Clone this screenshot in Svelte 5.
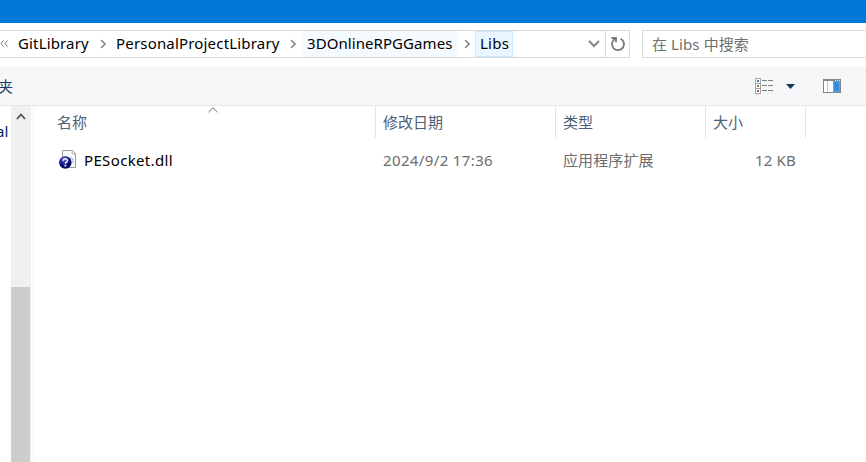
<script>
  const columns = [
    { label: '名称', width: 342 },
    { label: '修改日期', width: 180 },
    { label: '类型', width: 150 },
    { label: '大小', width: 100 }
  ];
</script>

<div class="window">
  <div class="titlebar"></div>
  <div class="navigation">
    <div class="address">
      <svg class="overflow" width="9" height="10" viewBox="0 0 9 10"><path d="M3.5 1.5 1 4.5l2.5 3M7.5 1.5 5 4.5l2.5 3" /></svg>
      <span class="crumb git">GitLibrary</span>
      <span class="sep"><svg width="6" height="10" viewBox="0 0 6 10"><path d="M1 1l4 4-4 4" /></svg></span>
      <span class="crumb project">PersonalProjectLibrary</span>
      <span class="sep"><svg width="6" height="10" viewBox="0 0 6 10"><path d="M1 1l4 4-4 4" /></svg></span>
      <span class="crumb games">3DOnlineRPGGames</span>
      <span class="sep"><svg width="6" height="10" viewBox="0 0 6 10"><path d="M1 1l4 4-4 4" /></svg></span>
      <span class="crumb libs">Libs</span>
      <svg class="drop" width="12" height="8" viewBox="0 0 12 8"><path d="M1 1l5 5 5-5" /></svg>
      <span class="refresh"><svg width="16" height="16" viewBox="0 0 16 16"><path d="M10.5 2.7A6 6 0 1 1 4.8 3.1M1.5 2H6v4.3" /></svg></span>
    </div>
    <div class="search">在 Libs 中搜索</div>
  </div>

  <div class="toolbar">
    <span class="folder">夹</span>
    <svg class="view" width="18" height="17" viewBox="0 0 18 17">
      <path fill="#a0a4a8" d="M0 0h6v16H0z" />
      <path fill="#fff" d="M1 1h4v4H1zM1 6h4v4H1zM1 11h4v4H1z" />
      <path fill="#387eae" d="M2 2h2v2H2z" /><path fill="#79923b" d="M2 7h2v2H2z" /><path fill="#bd5146" d="M2 12h2v2H2z" />
      <path fill="#7b8082" d="M7 2h5v1H7zM13 2h5v1h-5zM7 7h5v1H7zM13 7h5v1h-5zM7 12h5v1H7zM13 12h5v1h-5z" />
    </svg>
    <svg class="triangle" width="9" height="5" viewBox="0 0 9 5"><path fill="#18365d" d="M0 0h9L4.5 5z" /></svg>
    <svg class="pane" width="18" height="14" viewBox="0 0 18 14">
      <path fill="#858585" d="M0 0h18v14H0z" /><path fill="#fff" d="M1 2h16v11H1z" />
      <path fill="#c4c1b9" d="M4 2h1v11H4z" /><path fill="#55a8ef" d="M10 2h7v11h-7z" /><path fill="#318de0" d="M11 3h5v9h-5z" />
      <path fill="#ddd" d="M12 1h1v1h-1zM14 1h1v1h-1zM16 1h1v1h-1z" />
    </svg>
  </div>

  <main>
    <aside><span>al</span></aside>
    <div class="scrollbar">
      <svg width="10" height="7" viewBox="0 0 10 7"><path d="M1 6l4-4.5L9 6" /></svg>
      <div class="thumb"></div>
    </div>
    <section>
      <div class="heads">
        {#each columns as column, i}
          <div class="head" style:width="{column.width}px">
            {column.label}
            {#if i === 0}<svg class="sort" width="10" height="6" viewBox="0 0 10 6"><path d="M.5 5.2 5 .8l4.5 4.4" /></svg>{/if}
          </div>
        {/each}
      </div>
      <div class="file">
        <svg class="dll" width="18" height="20" viewBox="0 0 18 20">
          <defs><radialGradient id="ball" cx="40%" cy="30%"><stop offset="0" stop-color="#6267d5" /><stop offset=".55" stop-color="#2222a0" /><stop offset="1" stop-color="#080864" /></radialGradient></defs>
          <path class="sheet" fill="#f8fafb" stroke="#999" d="M3.5.5h10l3 3v14h-13z" />
          <path fill="#e3e5e6" stroke="#aaa" stroke-width=".7" d="M13 .5V4h3.5" />
          <circle cx="11" cy="11" r="3" fill="none" stroke="#a8c3cf" stroke-width="1.8" stroke-dasharray="1.5 .8" />
          <circle cx="6.3" cy="12.5" r="6.2" fill="url(#ball)" />
          <path fill="none" stroke="#fff" stroke-width="1.5" d="M4.2 10.7c.1-2.6 4.5-2.5 4.3 0-.1 1.5-2 1.5-2.1 3" />
          <path fill="#fff" d="M5.5 14.8h1.8v1.7H5.5z" />
        </svg>
        <span class="name">PESocket.dll</span>
        <span class="date">2024/9/2 17:36</span>
        <span class="type">应用程序扩展</span>
        <span class="size">12 KB</span>
      </div>
    </section>
  </main>
</div>

<style>
  :global(body) { margin: 0; overflow: hidden; }
  * { box-sizing: border-box; }
  .window { width: 866px; height: 462px; overflow: hidden; display: flex; flex-direction: column; background: #fff; font: 15px/24px "Noto Sans", "Noto Sans CJK SC", sans-serif; color: #000; }
  svg { display: block; flex: none; fill: none; stroke-width: 1.6; }
  span { white-space: nowrap; }
  .titlebar { height: 23px; flex: none; background: #0078d7; }
  .navigation { height: 44px; flex: none; display: flex; padding-top: 7px; }
  .address { width: 630px; height: 28px; display: flex; align-items: center; border: 1px solid #d9d9d9; border-left: 0; }
  .overflow { stroke: #777; stroke-width: 1; }
  .crumb { height: 26px; line-height: 25px; flex: none; }
  .git { width: 83px; padding-left: 9px; letter-spacing: .15px; }
  .project { width: 168px; padding-left: 3px; letter-spacing: .18px; }
  .games { width: 155px; padding-left: 4px; letter-spacing: .07px; background: #f5faff; }
  .sep { width: 21px; flex: none; display: flex; justify-content: center; }
  .project + .sep { width: 22px; padding-left: 2px; }
  .sep svg { stroke: #888; }
  .games + .sep { width: 17px; }
  .libs { width: 38px; padding-left: 4px; background: #e9f5ff; border: 1px solid #cce8ff; line-height: 23px; letter-spacing: .25px; }
  .drop { margin-left: auto; margin-right: 5px; stroke: #858585; stroke-width: 2; }
  .refresh { width: 24px; height: 26px; border-left: 1px solid #d9d9d9; padding: 5px 4px; }
  .refresh svg { stroke: #777; stroke-width: 1.8; }
  .search { width: 224px; height: 28px; margin-left: 12px; padding-left: 9px; border: 1px solid #d9d9d9; border-right: 0; color: #707070; line-height: 26px; letter-spacing: .1px; }
  .toolbar { height: 39px; flex: none; display: flex; align-items: center; background: #f5f6f7; border-bottom: 1px solid #e5e7e9; color: #1e395b; }
  .folder { width: 755px; margin-left: -2px; }
  .view { margin-left: 2px; }
  .triangle { margin-left: 13px; }
  .pane { margin-left: 28px; }
  main { display: flex; height: 356px; }
  aside { width: 11px; padding-top: 13px; overflow: hidden; color: #002654; }
  aside span { margin-left: -4px; }
  .scrollbar { width: 20px; background: #f0f0f0; padding: 7px 1px 0 0; display: flex; flex-direction: column; align-items: center; }
  .scrollbar svg { stroke: #505050; stroke-width: 1.8; }
  .thumb { width: 19px; height: 175px; margin-top: auto; background: #cdcdcd; }
  section { margin-left: 2px; width: 833px; border-left: 1px solid #f2f2f2; }
  .heads { height: 32px; display: flex; }
  .head { position: relative; border-right: 1px solid #e5e5e5; padding: 4px 0 0 7px; color: #4c607a; }
  .head:first-child { padding-left: 23px; }
  .sort { position: absolute; left: 174px; top: 1px; stroke: #707070; stroke-width: 1; }
  .sheet { stroke-width: 1; }
  .file { display: flex; height: 44px; align-items: center; padding-left: 25px; color: #6d6d6d; }
  .name { color: #000; width: 306px; padding-left: 7px; letter-spacing: .35px; }
  .date { width: 180px; letter-spacing: .37px; }
  .type { width: 150px; letter-spacing: .1px; }
  .size { width: 83px; text-align: right; letter-spacing: .2px; }
</style>
